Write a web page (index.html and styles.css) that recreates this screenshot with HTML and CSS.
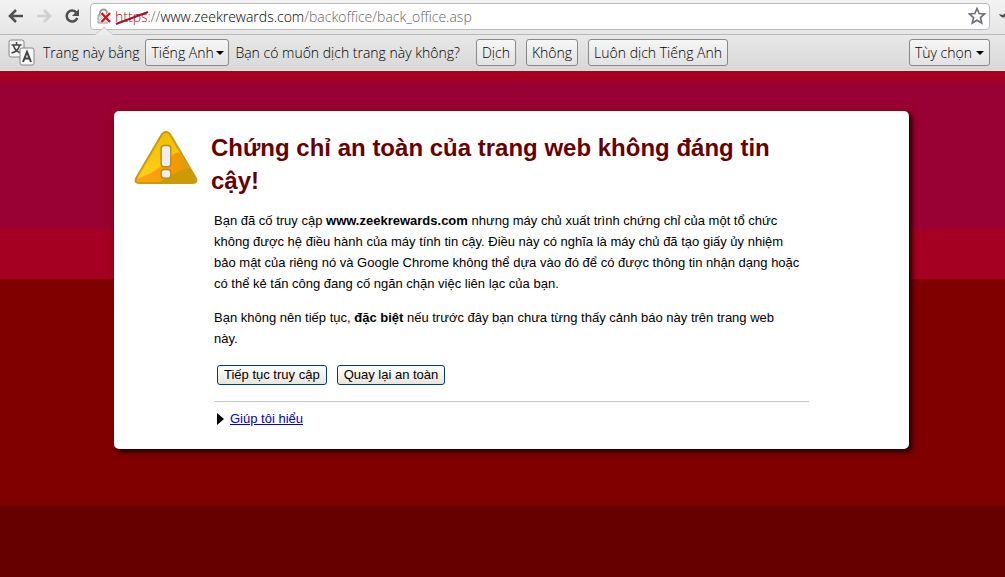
FILE: index.html
```html
<!DOCTYPE html>
<html lang="vi">
<head>
    <meta charset="utf-8">
    <title>Lỗi SSL</title>
    <link rel="stylesheet" href="styles.css">
</head>
<body>
    <header class="toolbar">
        <button class="nav-button" type="button" aria-label="Quay lại">
            <svg width="16" height="14" viewBox="0 0 16 14"><path d="M8 1L2 7l6 6M2 7h13" fill="none" stroke="#505050" stroke-width="2.600"/></svg>
        </button>
        <button class="nav-button" type="button" aria-label="Tiến" disabled>
            <svg width="16" height="14" viewBox="0 0 16 14"><path d="M8 1l6 6-6 6M14 7H1" fill="none" stroke="#cfcfcf" stroke-width="2.600"/></svg>
        </button>
        <button class="nav-button" type="button" aria-label="Tải lại">
            <svg width="16" height="16" viewBox="0 0 16 16"><path d="M12.500 4.500A5.500 5.500 0 1 0 13.300 10" fill="none" stroke="#505050" stroke-width="2.600"/><path d="M15 1v7H8z" fill="#505050"/></svg>
        </button>
        <div class="omnibox">
            <svg class="lock" width="15" height="16" viewBox="0 0 15 16">
                <path d="M3 7V5a3.500 3.500 0 0 1 7 0v2" fill="none" stroke="#999" stroke-width="2"/>
                <path d="M1 7h10v8H1z" fill="#d8d8d8" stroke="#999"/>
                <path d="M4.500 5l8.500 9M13 5l-8.500 9" stroke="#fff" stroke-width="4"/>
                <path d="M4.500 5l8.500 9M13 5l-8.500 9" stroke="#d0101b" stroke-width="2.400"/>
            </svg>
            <span class="scheme">https<svg class="strike" width="34" height="14" viewBox="0 0 34 14"><path d="M1 13L33 1" stroke="#a31420" stroke-width="2"/></svg></span>
            <span class="slashes">://</span>
            <span class="host">www.zeekrewards.com</span>
            <input class="path" type="text" aria-label="Địa chỉ" value="/backoffice/back_office.asp">
            <button class="star" type="button" aria-label="Đánh dấu trang">
                <svg width="18" height="18" viewBox="0 0 18 18"><path d="M9 1.500l2.200 5 5.300.5-4 3.600 1.200 5.400L9 13.200 4.300 16l1.200-5.400-4-3.600 5.300-.5z" fill="#fff" stroke="#70707c" stroke-width="1.700"/></svg>
            </button>
        </div>
        <button class="wrench" type="button" aria-label="Tùy chỉnh">
            <svg width="16" height="16" viewBox="0 0 16 16"><path d="M0 6c1 3 4 4 6 3l5 6 3-2-5-6c1-3-1-6-3-6v4L4 7z" fill="#505050"/></svg>
        </button>
    </header>

    <div class="infobar">
        <svg class="pointer" width="18" height="9" viewBox="0 0 18 9"><path d="M0 9L9 1l9 8" fill="#ececec" stroke="#c8c8c8"/></svg>
        <svg class="translate-icon" width="27" height="27" viewBox="0 0 27 27">
            <rect x="1" y="1" width="15" height="17" rx="2" fill="#f4f4f4" stroke="#888"/>
            <path d="M8.500 3v3M3.500 6h10M5.500 6.500c1 4 4 6.500 8 7.500M11.500 6.500c-1 4-4 6.500-8 7.500" fill="none" stroke="#444" stroke-width="1.500"/>
            <rect x="12" y="9" width="14" height="17" rx="2" fill="#f8f8f8" stroke="#888"/>
            <path d="M15 23l4-10 4 10M16.500 19.500h5" fill="none" stroke="#444" stroke-width="2"/>
        </svg>
        <label for="language">Trang này bằng</label>
        <div class="select-box">
            <select class="bar-button" id="language">
                <option>Tiếng Anh</option>
            </select>
            <svg class="select-arrow" width="8" height="4" viewBox="0 0 8 4"><path d="M0 0h8L4 4z"/></svg>
        </div>
        <span class="question">Bạn có muốn dịch trang này không?</span>
        <div class="answers">
            <button class="bar-button" type="button">Dịch</button>
            <button class="bar-button" type="button">Không</button>
            <button class="bar-button" type="button">Luôn dịch Tiếng Anh</button>
        </div>
        <button class="bar-button options" type="button">Tùy chọn <svg width="8" height="4" viewBox="0 0 8 4"><path d="M0 0h8L4 4z"/></svg></button>
    </div>

    <main class="page">
        <div class="box">
            <svg class="warning" width="64" height="54" viewBox="0 0 66 56">
                <defs>
                    <linearGradient id="gold" x1="0" y1="0" x2="0" y2="1">
                        <stop offset="0" stop-color="#f0be00"/>
                        <stop offset="1" stop-color="#ffd21a"/>
                    </linearGradient>
                    <linearGradient id="amber" x1="0" y1="0" x2="1" y2="0">
                        <stop offset="0" stop-color="#ffa31a"/>
                        <stop offset=".5" stop-color="#fb9c08"/>
                        <stop offset="1" stop-color="#d99700"/>
                    </linearGradient>
                    <clipPath id="triangle"><path d="M29 3q4-4 8 0l27 46q2 5-3 5H5q-5 0-3-5z"/></clipPath>
                </defs>
                <g clip-path="url(#triangle)">
                    <path d="M0 0h66v56H0z" fill="url(#gold)"/>
                    <path d="M0 50C18 46 30 36 42 23l5-1 19 34H0z" fill="url(#amber)"/>
                    <path d="M22 56c8-6 20-14 36-18l8 18z" fill="#cc9a05"/>
                </g>
                <path d="M29 3q4-4 8 0l27 46q2 5-3 5H5q-5 0-3-5z" fill="none" stroke="#c99a10" stroke-width="2"/>
                <rect x="28" y="15" width="10" height="22" rx="3" fill="#eee" stroke="#b98b17" stroke-width="1.500"/>
                <rect x="28" y="40" width="10" height="9" rx="3" fill="#eee" stroke="#b98b17" stroke-width="1.500"/>
            </svg>
            <div class="content">
                <h1>Chứng chỉ an toàn của trang web không đáng tin cậy!</h1>
                <div class="details">
                    <p>Bạn đã cố truy cập <strong>www.zeekrewards.com</strong> nhưng máy chủ xuất trình chứng chỉ của một tổ chức<br>
                    không được hệ điều hành của máy tính tin cậy. Điều này có nghĩa là máy chủ đã tạo giấy ủy nhiệm<br>
                    bảo mật của riêng nó và Google Chrome không thể dựa vào đó để có được thông tin nhận dạng hoặc<br>
                    có thể kẻ tấn công đang cố ngăn chặn việc liên lạc của bạn.</p>
                    <p>Bạn không nên tiếp tục, <strong>đặc biệt</strong> nếu trước đây bạn chưa từng thấy cảnh báo này trên trang web<br>
                    này.</p>
                    <div class="buttons">
                        <button type="button">Tiếp tục truy cập</button>
                        <button type="button">Quay lại an toàn</button>
                    </div>
                    <div class="more">
                        <svg width="7" height="12" viewBox="0 0 7 12"><path d="M0 0l7 6-7 6z"/></svg>
                        <a href="#">Giúp tôi hiểu</a>
                    </div>
                </div>
            </div>
        </div>
    </main>
</body>
</html>
```
FILE: styles.css
```css
* {
    box-sizing: border-box;
}

body {
    margin: 0;
    min-height: 100vh;
    display: flex;
    flex-direction: column;
    font-family: "Liberation Sans", Arial, sans-serif;
    font-size: 13px;
    color: #000;
}

button, select, input {
    font: inherit;
    color: inherit;
    margin: 0;
}

svg {
    display: block;
    flex-shrink: 0;
}

/* browser toolbar */
.toolbar, .infobar {
    font-family: "Open Sans", "Noto Sans", sans-serif;
    font-size: 14px;
    font-weight: 300;
    white-space: nowrap;
}

.toolbar {
    display: flex;
    align-items: center;
    height: 34px;
    padding: 0 0 2px 8px;
    background: linear-gradient(#f3f3f3, #e6e6e6);
    overflow: hidden;
}

.nav-button, .star, .wrench {
    display: flex;
    border: 0;
    padding: 0;
    background: none;
}

.nav-button {
    width: 28px;
    flex-shrink: 0;
}

.omnibox {
    display: flex;
    align-items: center;
    flex: 1;
    height: 27px;
    margin-left: -2px;
    padding: 0 3px 0 5px;
    background: #fff;
    border: 1px solid #bbb;
    border-radius: 4px;
}

.lock {
    margin: 0 3px 0 1px;
}

.scheme {
    position: relative;
    color: #a31420;
}

.strike {
    position: absolute;
    left: 0;
    top: 4px;
}

.slashes, .path {
    color: #666;
}

.path {
    flex: 1;
    min-width: 0;
    border: 0;
    padding: 0;
    background: none;
    outline: none;
}

.wrench {
    width: 15px;
    flex-shrink: 0;
    padding-left: 9px;
    overflow: hidden;
}

/* translate bar */
.infobar {
    position: relative;
    display: flex;
    align-items: center;
    height: 37px;
    padding: 0 15px 0 8px;
    background: linear-gradient(#e8e8e8, #d8d8d8);
    border-top: 1px solid #b8b8b8;
    border-bottom: 1px solid #ddd;
}

.pointer {
    position: absolute;
    left: 95px;
    top: -9px;
}

.translate-icon {
    margin-right: 8px;
}

.select-box {
    position: relative;
    margin: 0 6px;
}

.bar-button {
    height: 27px;
    padding: 0 5px;
    border: 1px solid #888;
    border-radius: 3px;
    background: linear-gradient(#f6f6f6, #e2e2e2);
}

select.bar-button {
    display: block;
    appearance: none;
    width: 84px;
}

.select-arrow {
    position: absolute;
    right: 5px;
    top: 12px;
    pointer-events: none;
}

.answers {
    display: flex;
    gap: 10px;
    margin-left: 16px;
}

.options {
    display: flex;
    align-items: center;
    gap: 4px;
    margin-left: auto;
}

/* warning page */
.page {
    flex: 1;
    padding: 40px 96px 40px 114px;
    background: linear-gradient(#a50021 2%, #990033 2%, #990033 31.3%, #a50021 31.3%, #a50021 41.1%, #800000 41.1%, #800000 86%, #660000 86%);
}

.box {
    display: flex;
    align-items: flex-start;
    padding: 20px;
    background: #fff;
    border-radius: 5px;
    box-shadow: 3px 3px 5px #200000, 0 0 8px rgba(128, 0, 0, .6);
}

.warning {
    margin-right: 13px;
}

.content {
    flex: 1;
    max-width: 598px;
}

h1 {
    margin: 0 0 13px;
    font-size: 24px;
    line-height: 33px;
    color: #660000;
}

.details {
    padding-left: 3px;
    line-height: 21px;
}

p {
    margin: 0 0 13px;
}

.buttons {
    display: flex;
    gap: 10px;
    padding: 3px;
}

.buttons button {
    height: 20px;
    padding: 0 6px;
    line-height: 16px;
    border: 1px solid #003c74;
    border-radius: 3px;
    background: linear-gradient(#fff, #e6e5dc);
}

.more {
    display: flex;
    align-items: center;
    gap: 6px;
    margin-top: 13px;
    padding: 6px 3px 0;
    border-top: 1px solid #c8c8c8;
}

a {
    color: #0000cc;
}
```
